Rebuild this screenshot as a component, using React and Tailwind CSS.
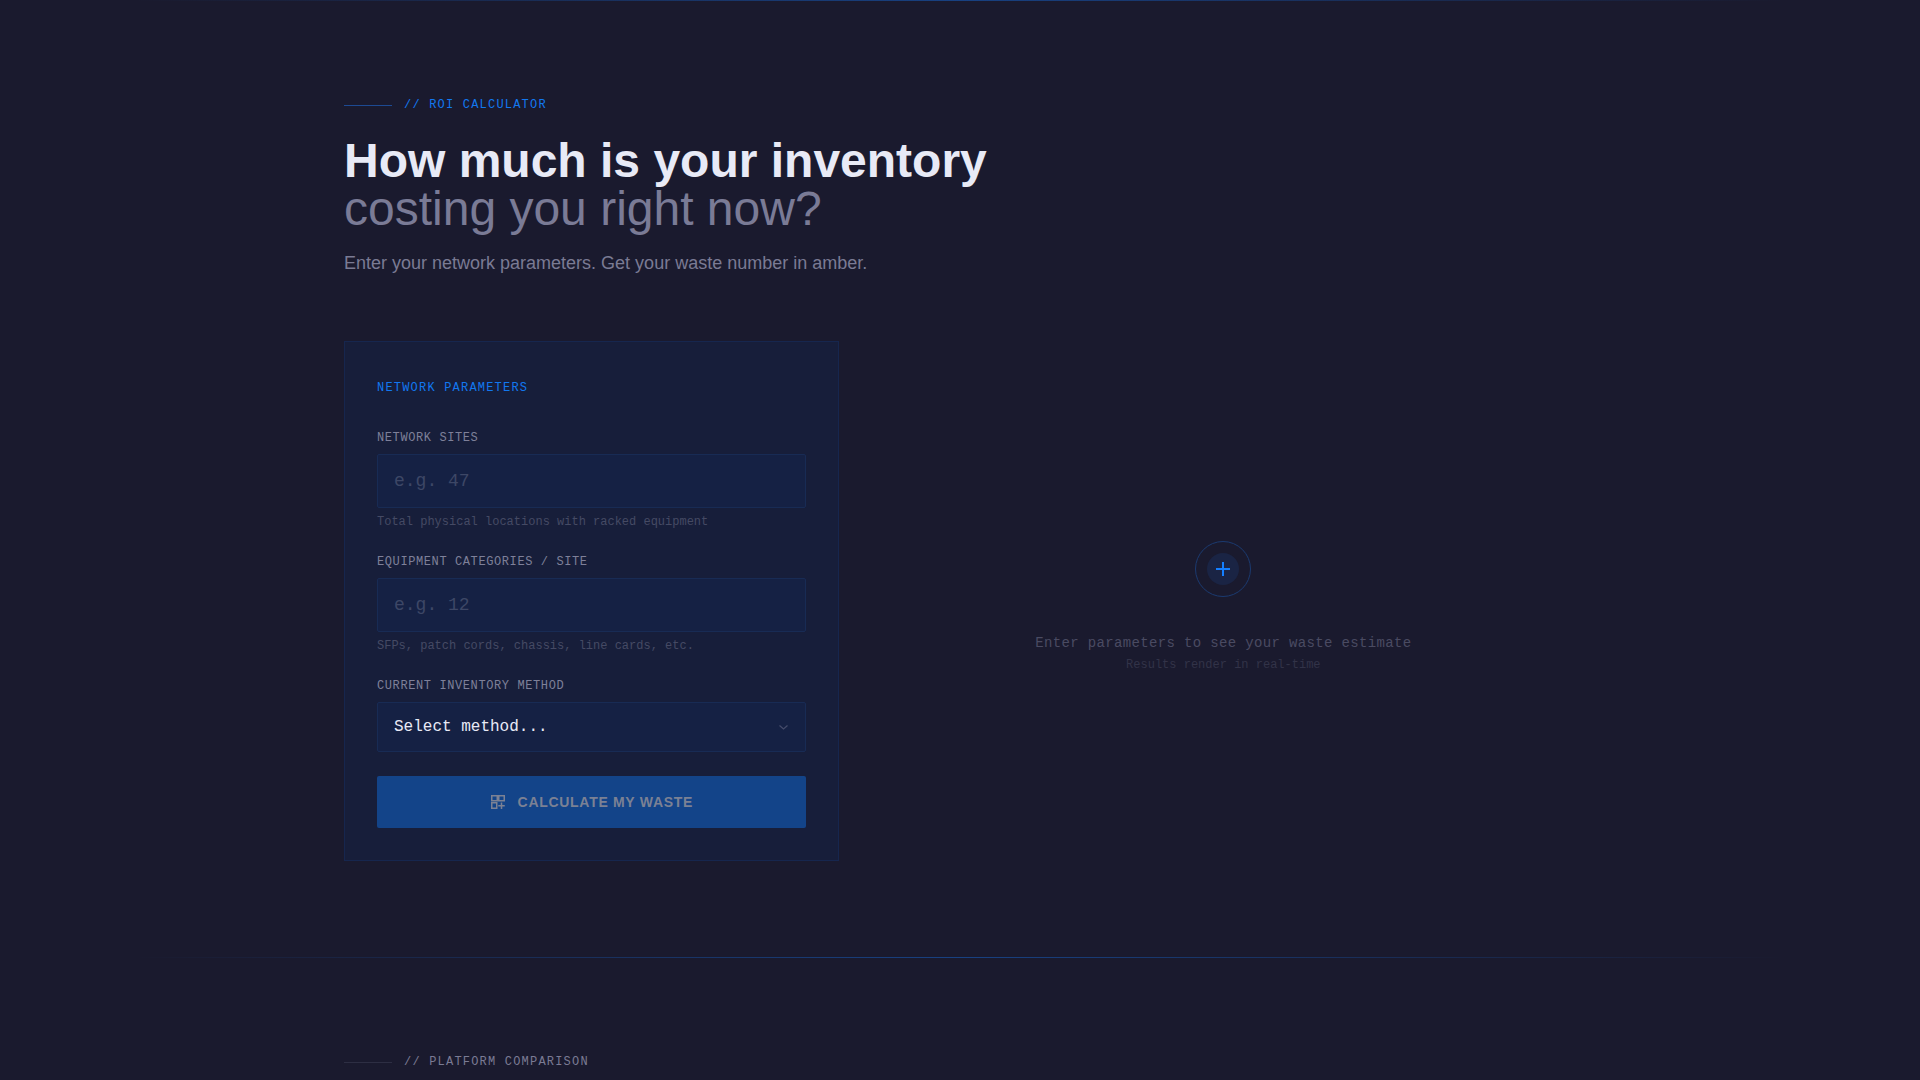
"use client";
import { useState } from "react";

const fieldClass =
  "block w-full rounded-xs border border-[#182b54] bg-[#152144] px-4 py-3 text-[#e8eaf6] placeholder:text-[#3d4766] focus:outline-none focus:border-[#0f7af5]";

const Divider = () => (
  <div className="mx-[7%] h-px bg-linear-to-r from-transparent via-[#147bff]/40 to-transparent" />
);

const Eyebrow = ({ children, lineClass, textClass }) => (
  <div className="flex items-center gap-3">
    <span className={`h-px w-12 ${lineClass}`} />
    <span className={`font-['Liberation_Mono',monospace] text-xs tracking-widest uppercase ${textClass}`}>
      {children}
    </span>
  </div>
);

const Label = ({ htmlFor, children }) => (
  <label
    htmlFor={htmlFor}
    className="mb-2 block text-xs tracking-wider text-[#7e8099] uppercase"
  >
    {children}
  </label>
);

const NumberField = ({ id, label, placeholder, hint, value, onChange }) => (
  <div>
    <Label htmlFor={id}>{label}</Label>
    <input
      id={id}
      type="text"
      inputMode="numeric"
      value={value}
      onChange={(e) => onChange(e.target.value)}
      placeholder={placeholder}
      className={`${fieldClass} text-lg leading-7`}
    />
    <p className="mt-1.5 text-xs text-[#454a64]">{hint}</p>
  </div>
);

const App = () => {
  const [sites, setSites] = useState("");
  const [categories, setCategories] = useState("");
  const [method, setMethod] = useState("");

  return (
    <main className="min-h-screen bg-[#1a1a2e] font-['Liberation_Sans',sans-serif] text-[#e8eaf6]">
      <Divider />
      <section className="mx-auto max-w-7xl px-6 py-24">
        <Eyebrow lineClass="bg-[#1d4a93]" textClass="text-[#1278f0]">
          // ROI Calculator
        </Eyebrow>
        <h2 className="mt-6 text-5xl leading-none font-bold">
          How much is your inventory
          <br />
          <span className="font-normal text-[#7a7b96]">costing you right now?</span>
        </h2>
        <p className="mt-4 text-lg leading-7 text-[#7a7b94]">
          Enter your network parameters. Get your waste number in amber.
        </p>

        <div className="mt-16 grid grid-cols-12 gap-8 font-['Liberation_Mono',monospace]">
          <form
            onSubmit={(e) => e.preventDefault()}
            className="col-span-5 border border-[#16264e] bg-[#171e3a] p-8"
          >
            <h3 className="mb-7 text-xs leading-7 tracking-widest text-[#1278f0] uppercase">
              Network Parameters
            </h3>
            <div className="flex flex-col gap-6">
              <NumberField
                id="sites"
                label="Network Sites"
                placeholder="e.g. 47"
                hint="Total physical locations with racked equipment"
                value={sites}
                onChange={setSites}
              />
              <NumberField
                id="categories"
                label="Equipment Categories / Site"
                placeholder="e.g. 12"
                hint="SFPs, patch cords, chassis, line cards, etc."
                value={categories}
                onChange={setCategories}
              />
              <div>
                <Label htmlFor="method">Current Inventory Method</Label>
                <div className="relative">
                  <select
                    id="method"
                    value={method}
                    onChange={(e) => setMethod(e.target.value)}
                    className={`${fieldClass} appearance-none text-base leading-6`}
                  >
                    <option value="">Select method...</option>
                    <option value="spreadsheet">Spreadsheets</option>
                    <option value="manual">Manual audits</option>
                  </select>
                  <svg
                    className="pointer-events-none absolute top-1/2 right-4 h-3 w-3 -translate-y-1/2"
                    viewBox="0 0 12 12"
                    fill="none"
                    stroke="#454c6b"
                    strokeWidth="1.2"
                  >
                    <path d="M1.5 4.5 5.5 8l4-3.5" />
                  </svg>
                </div>
              </div>
            </div>
            <button
              type="submit"
              className="mt-6 flex w-full items-center justify-center gap-3 rounded-xs bg-[#134489] py-4 font-['Liberation_Sans',sans-serif] text-sm font-bold tracking-wider text-[#7b8194] uppercase"
            >
              <svg className="h-4 w-4" viewBox="0 0 16 16" fill="none" stroke="currentColor" strokeWidth="1.5">
                <path d="M1.75 1.75h5.5v5h-5.5zM8.75 1.75h5.5v5h-5.5zM1.75 8.75h5v5.5h-5zM11.5 8.5V15M8.25 11.75H14.75" />
              </svg>
              Calculate My Waste
            </button>
          </form>

          <div className="col-span-7 flex flex-col items-center justify-center pt-3 text-center">
            <div className="flex h-14 w-14 items-center justify-center rounded-full border border-[#1a3a70]">
              <div className="flex h-8 w-8 items-center justify-center rounded-full bg-[#1a2444]">
                <svg className="h-4 w-4" viewBox="0 0 16 16" fill="none" stroke="#147fff" strokeWidth="2">
                  <path d="M8 1v14M1 8h14" />
                </svg>
              </div>
            </div>
            <p className="mt-9 text-sm tracking-wide text-[#4a4b62]">
              Enter parameters to see your waste estimate
            </p>
            <p className="mt-1 text-xs text-[#323348]">Results render in real-time</p>
          </div>
        </div>
      </section>

      <Divider />
      <section className="mx-auto max-w-7xl px-6 pt-24">
        <Eyebrow lineClass="bg-[#2d2e43]" textClass="text-[#7a7b94]">
          // Platform Comparison
        </Eyebrow>
      </section>
    </main>
  );
};

export default App;
